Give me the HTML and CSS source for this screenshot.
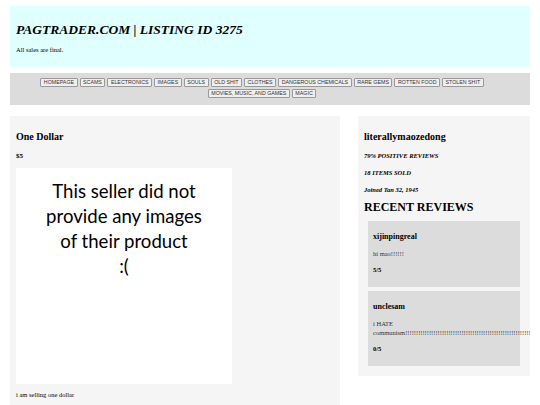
FILE: index.html
```html
<!DOCTYPE html>
<html lang="en">
  <head>
    <meta charset="UTF-8" />
    <meta name="viewport" content="width=device-width, initial-scale=1.0" />
    <title>PAGTRADER.COM | Listing ID 3275</title>
    <link rel="stylesheet" href="styles.css">
  </head>
  <body>
    <header class="banner">
      <h1>PAGTRADER.COM | LISTING ID 3275</h1>
      <p>All sales are final.</p>
    </header>

    <nav class="categories">
      <button>HOMEPAGE</button>
      <button>SCAMS</button>
      <button>ELECTRONICS</button>
      <button>IMAGES</button>
      <button>SOULS</button>
      <button>OLD SHIT</button>
      <button>CLOTHES</button>
      <button>DANGEROUS CHEMICALS</button>
      <button>RARE GEMS</button>
      <button>ROTTEN FOOD</button>
      <button>STOLEN SHIT</button>
      <button>MOVIES, MUSIC, AND GAMES</button>
      <button>MAGIC</button>
    </nav>

    <main class="listing">
      <section class="item">
        <h2>One Dollar</h2>
        <p class="price">$5</p>
        <div class="no-image">
          This seller did not<br />
          provide any images<br />
          of their product<br />
          :(
        </div>
        <p class="desc">i am selling one dollar</p>
      </section>

      <aside class="seller">
        <h2>literallymaozedong</h2>
        <p class="stat">79% POSITIVE REVIEWS</p>
        <p class="stat">18 ITEMS SOLD</p>
        <p class="stat">Joined Tan 32, 1945</p>
        <h3>RECENT REVIEWS</h3>

        <div class="review">
          <h4>xijinpingreal</h4>
          <p>hi mao!!!!!!</p>
          <p class="score">5/5</p>
        </div>
        <div class="review">
          <h4>unclesam</h4>
          <p>i HATE communism!!!!!!!!!!!!!!!!!!!!!!!!!!!!!!!!!!!!!!!!!!!!!!!!!!!!!!!!!!!!!!!!!!!!!!!!!!!!!!!!!!!!!!!!!!!!!!</p>
          <p class="score">0/5</p>
        </div>
      </aside>
    </main>
  </body>
</html>
```

FILE: styles.css
```css
body {
  margin: 6px 10px;
  font-family: "Liberation Serif", serif;
  color: black;
  background: white;
  overflow: hidden;
}
.banner {
  background: #e0ffff;
  padding: 6px;
  height: 49px;
}
.banner h1 {
  font-size: 13.5px;
  line-height: 16px;
  font-style: italic;
  margin: 9.5px 0 8.5px;
}
.banner p {
  font-size: 6.5px;
  line-height: 8px;
  margin: 0;
}
.categories {
  margin-top: 6px;
  background: #dcdcdc;
  padding: 5px 36px 7px 20px;
  display: flex;
  flex-wrap: wrap;
  justify-content: center;
  gap: 2px 2px;
}
.categories button {
  font-family: "Liberation Sans", sans-serif;
  font-size: 5.3px;
  height: 9px;
  line-height: 7px;
  padding: 0 2.5px;
  background: #efefef;
  color: #333;
  border: 1px solid #999;
  border-radius: 1px;
}
.listing {
  margin-top: 11px;
  display: flex;
  align-items: flex-start;
  gap: 18px;
}
.item {
  flex: none;
  width: 318px;
  background: #f5f5f5;
  padding: 6px 6px 20px;
}
.item h2 {
  font-size: 10px;
  line-height: 12px;
  margin: 9px 0 8.5px;
}
.price {
  font-size: 7px;
  line-height: 9px;
  font-weight: bold;
  margin: 0 0 7.5px;
}
.no-image {
  width: 216px;
  height: 216px;
  background: white;
  font-family: Lato, sans-serif;
  font-size: 18.6px;
  line-height: 25px;
  text-align: center;
  padding-top: 10.5px;
  box-sizing: border-box;
}
.desc {
  font-size: 6.5px;
  line-height: 9px;
  margin: 5.5px 0 0;
}
.seller {
  flex: 1;
  min-width: 0;
  background: #f5f5f5;
  padding: 6px 6px 6px;
}
.seller h2 {
  font-size: 10px;
  line-height: 11.5px;
  margin: 9.25px 0 7.75px;
}
.stat {
  font-size: 6.5px;
  line-height: 9px;
  font-weight: bold;
  font-style: italic;
  margin: 0 0 8px;
}
.seller .stat:last-of-type {
  margin-bottom: 6.5px;
}
.seller h3 {
  font-size: 12px;
  line-height: 14px;
  margin: 0 0 7px;
}
.review {
  background: #dcdcdc;
  margin: 0 4px 4px;
  padding: 6px 5px 13px;
}
.review h4 {
  font-size: 8px;
  line-height: 10px;
  margin: 5px 0 6.5px;
}
.review p {
  font-size: 6.5px;
  line-height: 9px;
  margin: 0 0 7.5px;
  color: #333;
}
.review .score {
  font-weight: bold;
  color: black;
  margin: 0;
}
```
